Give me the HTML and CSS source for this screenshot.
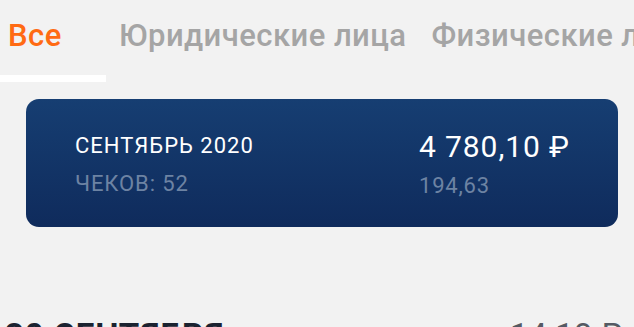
FILE: index.html
```html
<!DOCTYPE html>
<html lang="ru">
<head>
<meta charset="utf-8">
<link rel="stylesheet" href="styles.css">
</head>
<body>
<nav class="tabs">
  <div class="tab active"><span>Все</span></div>
  <div class="tab"><span>Юридические лица</span></div>
  <div class="tab"><span>Физические лица</span></div>
</nav>
<section class="card">
  <div class="col">
    <div class="title">СЕНТЯБРЬ 2020</div>
    <div class="sub">ЧЕКОВ: 52</div>
  </div>
  <div class="col right">
    <div class="amount">4 780,10 ₽</div>
    <div class="sub2">194,63</div>
  </div>
</section>
<div class="day">
  <div class="day-title">30 СЕНТЯБРЯ</div>
  <div class="day-sum">14 18 ₽</div>
</div>
</body>
</html>
```
FILE: styles.css
```css
html, body {
  margin: 0;
  padding: 0;
  background: #f2f2f2;
  font-family: Roboto, "Noto Sans", sans-serif;
  overflow: hidden;
  width: 634px;
  height: 327px;
}
.tabs {
  display: flex;
  white-space: nowrap;
  height: 82px;
}
.tab {
  font-size: 31px;
  font-weight: 500;
  letter-spacing: 0.45px;
  color: #a5a5a5;
  line-height: 30px;
  padding: 21px 12px 0 13px;
  box-sizing: border-box;
  flex: none;
}
.tab.active {
  width: 106px;
  padding-left: 8px;
  color: #ff6a13;
  border-bottom: 7px solid #ffffff;
}
.card {
  margin: 17px 16px 0 26px;
  height: 128px;
  box-sizing: border-box;
  border-radius: 13px;
  background: linear-gradient(180deg, #163e72 0%, #0f2b5c 100%);
  display: flex;
  justify-content: space-between;
  padding: 34px 0 0 49px;
}
.col.right {
  width: 199px;
}
.title {
  color: #ffffff;
  font-size: 22px;
  letter-spacing: 1px;
  line-height: 26px;
}
.sub {
  color: #6d83a3;
  font-size: 22px;
  letter-spacing: 0.9px;
  line-height: 26px;
  margin-top: 12px;
}
.amount {
  color: #ffffff;
  font-size: 30px;
  letter-spacing: 0.9px;
  line-height: 34px;
  margin-top: -3px;
}
.sub2 {
  color: #6d83a3;
  font-size: 22px;
  letter-spacing: 0.8px;
  line-height: 26px;
  margin-top: 9px;
}
.day {
  display: flex;
  padding: 92px 0 0 5px;
  white-space: nowrap;
}
.day-title {
  font-size: 33px;
  font-weight: 700;
  letter-spacing: 0.8px;
  color: #1b2230;
  line-height: 33px;
}
.day-sum {
  margin-left: auto;
  width: 124px;
  flex: none;
  font-size: 33px;
  color: #555a63;
  line-height: 33px;
}
```
